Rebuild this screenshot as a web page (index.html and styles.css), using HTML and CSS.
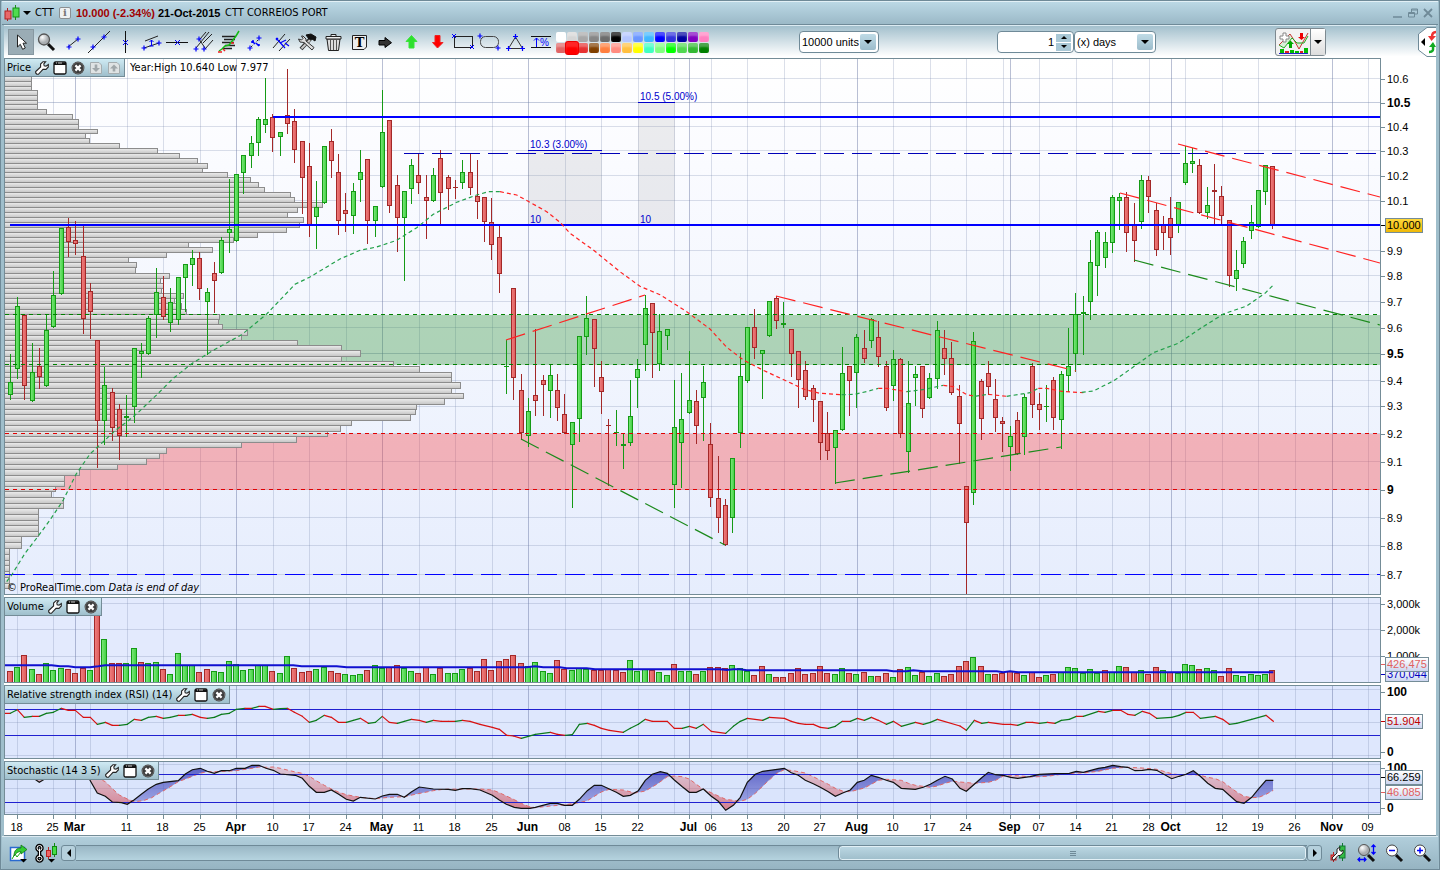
FILE: index.html
```
<!DOCTYPE html>
<html lang="en">
<head>
<meta charset="utf-8">
<title>CTT CORREIOS PORT</title>
<link rel="stylesheet" href="styles.css">
</head>
<body>
<svg class="defs" aria-hidden="true">
  <defs>
    <symbol id="wrench" viewBox="0 0 14 14"><path d="M2 13.3 L.7 12 L.7 10.6 L5.6 6 L5.6 3 L8 .7 L10.6 .7 L8.8 3 L9.2 4.8 L11 5.2 L13.3 3.6 L13.3 6 L11 8.4 L8 8.4 L3.4 13.3Z" fill="#fff" stroke="#222" stroke-width="1.1"/></symbol>
    <symbol id="win" viewBox="0 0 14 14"><rect x="1" y="1" width="12" height="12" rx="1.5" fill="#fff" stroke="#111" stroke-width="1.3"/><path d="M1 1.5H13V4H1Z" fill="#111"/><path d="M3 2H4M5 2H9" stroke="#ccc"/></symbol>
    <symbol id="close" viewBox="0 0 14 14"><circle cx="7" cy="7" r="6.4" fill="#3c3c3c"/><circle cx="7" cy="7" r="5.6" fill="none" stroke="#666"/><path d="M4.4 4.4L9.6 9.6M9.6 4.4L4.4 9.6" stroke="#fff" stroke-width="2.2"/></symbol>
    <symbol id="movedown" viewBox="0 0 14 14"><path d="M1.5 1.5H10L12.5 4V12.5H1.5Z" fill="#dfe3e4" stroke="#a5adb0"/><path d="M5.7 3.5H8.3V7H11L7 11L3 7H5.7Z" fill="#a0a7aa"/></symbol>
    <symbol id="moveup" viewBox="0 0 14 14"><path d="M1.5 1.5H10L12.5 4V12.5H1.5Z" fill="#dfe3e4" stroke="#a5adb0"/><path d="M5.7 10.5H8.3V7.5H11L7 3.5L3 7.5H5.7Z" fill="#a0a7aa"/></symbol>
    <symbol id="plus" viewBox="-3 -3 6 6" overflow="visible"><path d="M-2.5 0H2.5M0 -2.5V2.5" stroke="#00f" stroke-width="1.2"/></symbol>
    <linearGradient id="gbar" x1="0" x2="0" y1="0" y2="1"><stop offset="0" stop-color="#eee"/><stop offset="1" stop-color="#c4c4c4"/></linearGradient>
    <linearGradient id="gup" x1="0" x2="1"><stop offset="0" stop-color="#7ee87e"/><stop offset="1" stop-color="#3fd03f"/></linearGradient>
    <linearGradient id="gdn" x1="0" x2="1"><stop offset="0" stop-color="#f08080"/><stop offset="1" stop-color="#dd5a5a"/></linearGradient>
    <linearGradient id="gblue" gradientUnits="userSpaceOnUse" x1="0" x2="0" y1="765" y2="812"><stop offset="0" stop-color="#2a2fb0" stop-opacity=".75"/><stop offset="1" stop-color="#6a70d0" stop-opacity=".45"/></linearGradient>
    <linearGradient id="gred" gradientUnits="userSpaceOnUse" x1="0" x2="0" y1="765" y2="812"><stop offset="0" stop-color="#d88" stop-opacity=".3"/><stop offset="1" stop-color="#d04050" stop-opacity=".65"/></linearGradient>
    <radialGradient id="lens" cx=".35" cy=".3"><stop offset="0" stop-color="#fff"/><stop offset="1" stop-color="#a9adb0"/></radialGradient>
  </defs>
</svg>
<div class="window">
  <header class="titlebar">
    <svg class="ticker" viewBox="0 0 16 18"><path d="M3.500 4V17" stroke="#b02020"/><rect x="1" y="7" width="6" height="8" fill="#e86868" stroke="#b02020"/><path d="M11.500 1V16" stroke="#159015"/><rect x="9" y="4" width="6" height="9" fill="#4fdc4f" stroke="#159015"/></svg>
    <button class="caret" aria-label="Choose instrument"><svg viewBox="0 0 8 4"><path d="M0 0H8L4 4Z"/></svg></button>
    <span class="symbol">CTT</span>
    <span class="info">i</span>
    <strong class="quote">10.000 (-2.34%)</strong>
    <strong class="date">21-Oct-2015</strong>
    <span class="fullname">CTT CORREIOS PORT</span>
    <div class="winbtns">
      <button aria-label="Minimize"><svg viewBox="0 0 10 10"><path d="M0 9H9" stroke-width="1.5"/></svg></button>
      <button aria-label="Restore"><svg viewBox="0 0 10 10"><path d="M3.500 4V1H9.500V6H7M.5 4.500H6.500V9H.5ZM3.500 2H9.500M.5 5.500H6.500"/></svg></button>
      <button aria-label="Close window"><svg viewBox="0 0 10 10"><path d="M1 1L9 9M9 1L1 9" stroke-width="1.8"/></svg></button>
    </div>
  </header>

  <div class="toolbar">
    <div class="tools">
      <button class="on" aria-label="Pointer"><svg viewBox="0 0 26 26"><path d="M9.500 6V18L12.300 15.300L14.600 20.300L17.300 19L15 14.200H18.500Z" fill="#fff" stroke="#222"/></svg></button>
      <button aria-label="Zoom"><svg viewBox="0 0 26 26"><path d="M14 15L20 21" stroke="#111" stroke-width="3"/><circle cx="10" cy="10.500" r="5.500" fill="url(#lens)" stroke="#555" stroke-width="1.300"/></svg></button>
      <button aria-label="Segment"><svg viewBox="0 0 26 26"><path d="M8 18L18 10" stroke="#222"/><use href="#plus" x="6" y="15" width="6" height="6"/><use href="#plus" x="15" y="7" width="6" height="6"/></svg></button>
      <button aria-label="Line"><svg viewBox="0 0 26 26"><path d="M2 24L24 2" stroke="#222"/><use href="#plus" x="4" y="15" width="6" height="6"/><use href="#plus" x="15" y="5" width="6" height="6"/></svg></button>
      <button aria-label="Vertical line"><svg viewBox="0 0 26 26"><path d="M13.500 2V24" stroke="#111"/><path d="M11 11L16 16M16 11L11 16" stroke="#00f"/></svg></button>
      <button aria-label="Channel"><svg viewBox="0 0 26 26"><path d="M7 12L20 7M6 19L21 14" stroke="#222"/><path d="M13.500 17V11M11.500 13L13.500 11L15.500 13M11.500 17H15.500" stroke="#00f" fill="none"/><use href="#plus" x="3" y="16" width="6" height="6"/><use href="#plus" x="18" y="11" width="6" height="6"/></svg></button>
      <button aria-label="Horizontal line"><svg viewBox="0 0 26 26"><path d="M2 13.500H24" stroke="#111"/><path d="M11 11L16 16M16 11L11 16" stroke="#00f"/></svg></button>
      <button aria-label="Pitchfork"><svg viewBox="0 0 26 26"><path d="M6 19L19 3M10 10L16 3M15 20L23 11M13 14L22 5M9 10L15 19" stroke="#222"/><use href="#plus" x="6" y="7" width="6" height="6"/><use href="#plus" x="3" y="17" width="6" height="6"/><use href="#plus" x="11" y="17" width="6" height="6"/></svg></button>
      <button aria-label="Signals"><svg viewBox="0 0 26 26"><path d="M6 7.500H20M8 10.500H19M6 13.500H18M9 16.500H19M7 19.500H16" stroke="#222" stroke-width="1.500"/><path d="M3 22L6 20L9 17L13 16L17 11L20 7L23 2" stroke="#1b1" stroke-width="1.500" fill="none"/><path d="M2 23H6M7 20L9 22M15 14H18" stroke="#e22" stroke-width="1.500"/></svg></button>
      <button aria-label="Duplicate"><svg viewBox="0 0 26 26"><path d="M9 18L17 10" stroke="#222" stroke-dasharray="2 2"/><path d="M10 12L13 15M10 12V14M10 12H12M17 17L14 14M17 17V15" stroke="#00f" stroke-width="1.500"/><use href="#plus" x="5" y="16" width="6" height="6"/><use href="#plus" x="14" y="6" width="6" height="6"/></svg></button>
      <button aria-label="Parallels"><svg viewBox="0 0 26 26"><path d="M5 19L17 5M11 22L22 10" stroke="#222"/><path d="M8 9L17 19M12 14L18 11M8 11L10 9M17 14L21 17" stroke="#00f" stroke-width="1.200"/></svg></button>
      <button aria-label="Settings"><svg viewBox="0 0 26 26"><path d="M17 9L7 20" stroke="#333" stroke-width="4"/><path d="M16 11L7.500 19.500" stroke="#ccc" stroke-width="1.800"/><path d="M12 6L17 5L22 8L21 12L18 10L15 10Z" fill="#111" stroke="#111"/><path d="M9 7L12 10V12L20 18.500L18 21L10 13.500L6 13L4.500 10L7.500 11L9 9.500L7.500 7Z" fill="#ddd" stroke="#333"/></svg></button>
      <button aria-label="Delete"><svg viewBox="0 0 26 26"><path d="M7 10H20L18.500 21.500H8.500Z" fill="#ddd" stroke="#222"/><path d="M6 7.500H21V10H6ZM11 5.500H16V7.500H11Z" fill="#eee" stroke="#222"/><path d="M10.500 11V21M13.500 11V21M16.500 11V21" stroke="#555"/></svg></button>
      <button aria-label="Text"><svg viewBox="0 0 26 26"><path d="M6.500 6.500H20.500V18L18 20.500H6.500Z" fill="#eee" stroke="#222"/><text x="13.500" y="18" class="glyph-t">T</text></svg></button>
      <button aria-label="Arrow right"><svg viewBox="0 0 26 26"><path d="M7 11.500H13V8.500L19.500 13.700L13 18.500V16H7Z" fill="#333" stroke="#000"/></svg></button>
      <button aria-label="Arrow up"><svg viewBox="0 0 26 26"><path d="M11 19V12.500H8L13.500 6.500L19 12.500H16V19Z" fill="#2de02d" stroke="#3be53b"/></svg></button>
      <button aria-label="Arrow down"><svg viewBox="0 0 26 26"><path d="M11 6.500V13.500H8.500L13.500 19L19 13.500H16V6.500Z" fill="#f00" stroke="#e22"/></svg></button>
      <button aria-label="Rectangle"><svg viewBox="0 0 26 26"><rect x="4.500" y="7.500" width="18" height="11" fill="none" stroke="#222"/><path d="M2 5L6 9M6 5L2 9M20 16L24 20M24 16L20 20" stroke="#00f"/></svg></button>
      <button aria-label="Ellipse"><svg viewBox="0 0 26 26"><rect x="4.500" y="7.500" width="18" height="11" rx="5" fill="none" stroke="#444"/><use href="#plus" x="1" y="4" width="6" height="6"/><use href="#plus" x="19" y="16" width="6" height="6"/></svg></button>
      <button aria-label="Triangle"><svg viewBox="0 0 26 26"><path d="M13.500 8L6.500 19.500H20.500Z" fill="none" stroke="#333"/><use href="#plus" x="10.500" y="4.500" width="6" height="6"/><use href="#plus" x="3.500" y="16.500" width="6" height="6"/><use href="#plus" x="17.500" y="16.500" width="6" height="6"/></svg></button>
      <button aria-label="Percentage"><svg viewBox="0 0 26 26"><path d="M3 7.500H23M3 18.500H23" stroke="#111"/><path d="M8.500 18V9M6 11.500L8.500 9L11 11.500" stroke="#00f" fill="none"/><text x="16.500" y="17" class="glyph-p">%</text></svg></button>
    </div>
    <div class="palette">
      <button style="background:#fff" aria-label="White"></button><button style="background:#d6d6d6" aria-label="Light grey"></button><button style="background:#a8a8a8" aria-label="Silver"></button><button style="background:#868686" aria-label="Grey"></button><button style="background:#6c6c6c" aria-label="Dark grey"></button><button style="background:#000" aria-label="Black"></button><button style="background:#b4c6ff" aria-label="Pale blue"></button><button style="background:#6a96ff" aria-label="Soft blue"></button><button style="background:#40b8ff" aria-label="Sky"></button><button style="background:#0000ff" aria-label="Blue"></button><button style="background:#3232dc" aria-label="Royal blue"></button><button style="background:#0000a0" aria-label="Navy"></button><button style="background:#8000c0" aria-label="Purple"></button><button style="background:#ff80c0" aria-label="Pink"></button>
      <button style="background:#e06464" aria-label="Rose"></button><button class="picked" style="background:#f00" aria-label="Red"></button><button style="background:#e63232" aria-label="Crimson"></button><button style="background:#804000" aria-label="Brown"></button><button style="background:#ff8040" aria-label="Orange"></button><button style="background:#ff8c80" aria-label="Salmon"></button><button style="background:#ffc040" aria-label="Amber"></button><button style="background:#ffff00" aria-label="Yellow"></button><button style="background:#40ffc0" aria-label="Aqua"></button><button style="background:#80ff80" aria-label="Light green"></button><button style="background:#00ff00" aria-label="Lime"></button><button style="background:#50d850" aria-label="Mid green"></button><button style="background:#32b832" aria-label="Leaf"></button><button style="background:#008000" aria-label="Green"></button>
    </div>
    <div class="field units"><select aria-label="Units"><option>10000 units</option></select><span class="drop"><svg viewBox="0 0 8 4"><path d="M0 0H8L4 4Z"/></svg></span></div>
    <div class="period">
      <div class="field count"><input type="text" value="1" aria-label="Period count"><span class="spin"><button aria-label="Increase"><svg viewBox="0 0 6 3"><path d="M0 3H6L3 0Z"/></svg></button><button aria-label="Decrease"><svg viewBox="0 0 6 3"><path d="M0 0H6L3 3Z"/></svg></button></span></div>
      <div class="field unit"><select aria-label="Period unit"><option>(x) days</option></select><span class="drop"><svg viewBox="0 0 8 4"><path d="M0 0H8L4 4Z"/></svg></span></div>
    </div>
    <div class="indicator">
      <button aria-label="Add indicator"><svg viewBox="0 0 32 24"><path d="M2 15L8 9L13 4L17 10L22 19L31 3V8L25 12L20 13L15 8L7 18Z" fill="#d8f0d8"/><path d="M2 15L8 9L13 4L17 10L22 19L31 3" fill="none" stroke="#c33"/><path d="M2 15L7 18L15 8L20 13L27 13L31 6" fill="none" stroke="#2a2"/><path d="M6 3H9V6H12V9H9V12H6V9H3V6H6Z" fill="#fff" stroke="#888"/><path d="M12 18V14H10L13.500 10.500L17 14H15V18Z" fill="#0a0"/><path d="M23 3H26V7H28L24.500 10L21 7H23Z" fill="#e00"/><path d="M3 19H7V23H3ZM13 20H17V23H13ZM18 21H22V23H18ZM27 18H31V23H27Z" fill="#0b0"/><path d="M8 21H12V23H8ZM23 21H26V23H23Z" fill="#d22"/><path d="M2 23.500H31" stroke="#22c"/></svg></button>
      <button class="more" aria-label="Indicator list"><svg viewBox="0 0 8 4"><path d="M0 0H8L4 4Z"/></svg></button>
    </div>
    <button class="sidetab" aria-label="Open side panel"><svg viewBox="0 0 18 30"><path d="M18 .5H9L.5 7V23L9 29.500H18" fill="#fff" stroke="#6f8a98"/><path d="M7 11V19L3 15Z"/><path d="M18 5C14 5 14 8 14 10" stroke="#e33" stroke-width="2.500" fill="none"/><path d="M10 9H18L13.500 14Z" fill="#e33"/><path d="M11 25C16 25 15 22 15 20" stroke="#1a2" stroke-width="2.500" fill="none"/><path d="M11 20H18L15 15Z" fill="#1a2"/></svg></button>
  </div>

  <main class="charts">
    <section class="pane price">
      <div class="plot">
        <svg id="price" viewBox="5 59 1375 535" preserveAspectRatio="none"></svg>
        <div class="tag"><span>Price</span><button aria-label="Price settings"><svg><use href="#wrench"/></svg></button><button aria-label="Price window"><svg><use href="#win"/></svg></button><button aria-label="Close price"><svg><use href="#close"/></svg></button><button aria-label="Move price down"><svg><use href="#movedown"/></svg></button><button aria-label="Move price up"><svg><use href="#moveup"/></svg></button></div>
        <div class="range">Year:High 10.640 Low 7.977</div>
        <div class="credit">© ProRealTime.com <em>Data is end of day</em></div>
        <div id="notes"></div>
      </div>
      <div class="axis" id="priceAxis"></div>
    </section>
    <section class="pane volume">
      <div class="plot">
        <svg id="volume" viewBox="5 598 1375 84" preserveAspectRatio="none"></svg>
        <div class="tag"><span>Volume</span><button aria-label="Volume settings"><svg><use href="#wrench"/></svg></button><button aria-label="Volume window"><svg><use href="#win"/></svg></button><button aria-label="Close volume"><svg><use href="#close"/></svg></button></div>
      </div>
      <div class="axis" id="volumeAxis"></div>
    </section>
    <section class="pane rsi">
      <div class="plot">
        <svg id="rsi" viewBox="5 686 1375 72" preserveAspectRatio="none"></svg>
        <div class="tag"><span>Relative strength index (RSI) (14)</span><button aria-label="RSI settings"><svg><use href="#wrench"/></svg></button><button aria-label="RSI window"><svg><use href="#win"/></svg></button><button aria-label="Close RSI"><svg><use href="#close"/></svg></button></div>
      </div>
      <div class="axis" id="rsiAxis"></div>
    </section>
    <section class="pane stoch">
      <div class="plot">
        <svg id="stoch" viewBox="5 762 1375 52" preserveAspectRatio="none"></svg>
        <div class="tag"><span>Stochastic (14 3 5)</span><button aria-label="Stochastic settings"><svg><use href="#wrench"/></svg></button><button aria-label="Stochastic window"><svg><use href="#win"/></svg></button><button aria-label="Close stochastic"><svg><use href="#close"/></svg></button></div>
      </div>
      <div class="axis" id="stochAxis"></div>
    </section>
    <div class="dates"><div class="days" id="days"></div></div>
  </main>

  <footer class="bottombar">
    <button class="share" aria-label="Share"><svg viewBox="0 0 20 20"><rect x="1.500" y="4.500" width="14" height="13" fill="#fff" stroke="#2a6ad0" stroke-width="1.500"/><path d="M3 16L6 11L8 14L12 9" stroke="#1a1" fill="none"/><path d="M5 13C5 7 8 5 12 5V2L18 6.500L12 11V8.500C9 8.500 7 10 5 13Z" fill="#3c3" stroke="#171" stroke-width=".8"/><path d="M11 16H18L14.500 19.500Z"/></svg></button>
    <button class="link" aria-label="Link charts"><svg viewBox="0 0 24 20"><g fill="none" stroke="#000" stroke-width="3.500"><rect x="3" y="2.500" width="5" height="5" rx="2.500"/><rect x="3" y="13" width="5" height="5" rx="2.500"/><path d="M5.500 6V14"/></g><g fill="none" stroke="#fff"><rect x="3" y="2.500" width="5" height="5" rx="2.500"/><rect x="3" y="13" width="5" height="5" rx="2.500"/><path d="M5.500 6V14"/></g><path d="M14.500 4V16" stroke="#b22"/><rect x="12.500" y="7.500" width="4" height="6" fill="#e66" stroke="#b22"/><path d="M20.500 0V14" stroke="#181"/><rect x="18.500" y="3.500" width="4" height="8" fill="#4d4" stroke="#181"/><path d="M14 16H21L17.500 19.500Z"/></svg></button>
    <button class="step" aria-label="Scroll left"><svg viewBox="0 0 4 8"><path d="M4 0V8L0 4Z"/></svg></button>
    <div class="track"><div class="thumb"><i></i></div></div>
    <button class="step" aria-label="Scroll right"><svg viewBox="0 0 4 8"><path d="M0 0V8L4 4Z"/></svg></button>
    <button class="foot" aria-label="Chart style"><svg viewBox="0 0 20 20"><path d="M5.500 9V19" stroke="#b22"/><rect x="3" y="12" width="5" height="5" fill="#e55" stroke="#b22"/><path d="M14.500 0V18" stroke="#173"/><rect x="11.500" y="3" width="5.500" height="12" fill="#3b4" stroke="#173"/><path d="M5 17L4 15L9 10V6L12 4L11.500 7L13 8.500L15 7V10L12 12.500H10L6 17Z" fill="#fff" stroke="#222"/></svg></button>
    <button class="foot" aria-label="Fit"><svg viewBox="0 0 20 20"><path d="M12 12L18 18" stroke="#111" stroke-width="3"/><circle cx="8" cy="7" r="5.500" fill="url(#lens)" stroke="#555"/><path d="M17.500 2V11M15.500 4L17.500 2L19.500 4M15.500 9L17.500 11L19.500 9M2 16.500H10M4 14.500L2 16.500L4 18.500M8 14.500L10 16.500L8 18.500" stroke="#00f" fill="none" stroke-width="1.300"/></svg></button>
    <button class="foot" aria-label="Zoom out"><svg viewBox="0 0 20 20"><path d="M12 12L18 18" stroke="#111" stroke-width="3"/><circle cx="8" cy="7.500" r="5.500" fill="#fff" stroke="#444"/><path d="M5 7.500H11" stroke="#00f" stroke-width="1.500"/></svg></button>
    <button class="foot" aria-label="Zoom in"><svg viewBox="0 0 20 20"><path d="M12 12L18 18" stroke="#111" stroke-width="3"/><circle cx="8" cy="7.500" r="5.500" fill="#fff" stroke="#444"/><path d="M5 7.500H11M8 4.500V10.500" stroke="#00f" stroke-width="1.500"/></svg></button>
  </footer>
</div>
<script src="chart.js"></script>
</body>
</html>
```
FILE: styles.css
```
* { box-sizing: border-box; }
body {
  margin: 0;
  font: 11px/14px "DejaVu Sans Condensed", "Open Sans", sans-serif;
  color: #000;
}
button, input, select { font: inherit; color: inherit; }
button { margin: 0; padding: 0; border: 0; background: none; display: flex; align-items: center; justify-content: center; }
.defs { position: absolute; width: 0; height: 0; }
.window {
  height: 100vh;
  display: flex;
  flex-direction: column;
  border: 1px solid #6f8a98;
  padding: 0 3px;
  background: #9fbecb;
}

.titlebar {
  display: flex;
  align-items: center;
  height: 24px;
  flex: none;
  margin: 0 -2px;
  padding: 0 2px;
  background: linear-gradient(#bbd8e5, #9bb9c7);
  border-bottom: 1px solid #6f8a98;
  border-top: 1px solid #e2f0f6;
}
.ticker { width: 16px; height: 18px; flex: none; }
.caret { margin: 0 4px 0 3px; }
.caret svg { width: 8px; height: 4px; }
.symbol { width: 24px; }
.info {
  width: 12px;
  height: 12px;
  margin-right: 5px;
  border: 1px solid #8a8f92;
  border-radius: 2px;
  background: #eef1f2;
  color: #777;
  font: bold 10px/10px "DejaVu Serif", serif;
  text-align: center;
}
.quote, .date { font-family: "Liberation Sans", sans-serif; white-space: nowrap; }
.quote { color: #a00000; width: 82px; }
.date { width: 67px; }
.fullname { white-space: nowrap; }
.winbtns { margin-left: auto; display: flex; gap: 5px; padding-right: 3px; }
.winbtns svg { width: 10px; height: 10px; fill: none; stroke: #6f8a98; }

.toolbar {
  display: flex;
  align-items: center;
  height: 33px;
  flex: none;
  padding-left: 4px;
  background: linear-gradient(#a3c0cd, #fff 95%);
  border-top: 1px solid #dcebf2;
}
.tools { display: flex; }
.tools button { width: 26px; height: 26px; }
.tools .on { background: #9aacb5; border: 1px solid #8798a1; }
.tools svg { width: 26px; height: 26px; flex: none; }
.glyph-t { font: bold 13px "DejaVu Serif", serif; text-anchor: middle; }
.glyph-p { font: 10px "Liberation Sans", sans-serif; text-anchor: middle; fill: #00f; }
.palette {
  display: grid;
  grid-template-columns: repeat(14, 10px);
  grid-auto-rows: 10px;
  gap: 1px;
  margin-left: 2px;
}
.palette button { border-radius: 2px; box-shadow: inset 0 4px 2px rgba(255, 255, 255, .3); }
.palette .picked { margin: -1px; z-index: 1; box-shadow: 0 0 0 1px #e00, inset 0 5px 2px rgba(255, 255, 255, .15); }
.field {
  position: relative;
  height: 22px;
  background: #fff;
  border: 1px solid #6f8a98;
  border-radius: 4px;
  padding: 0 2px;
  display: flex;
  align-items: center;
  font-family: "Liberation Sans", sans-serif;
}
.field select, .field input { appearance: none; border: 0; background: none; width: 100%; height: 20px; padding: 0; margin: 0; outline: 0; }
.drop {
  position: absolute;
  right: 2px;
  top: 2px;
  width: 16px;
  height: 16px;
  border-radius: 2px;
  background: linear-gradient(#bfdbe6, #9cbccb);
  display: flex;
  align-items: center;
  justify-content: center;
  pointer-events: none;
}
.drop svg { width: 8px; height: 4px; }
.units { width: 80px; margin-left: 90px; }
.period { display: flex; margin-left: 118px; }
.count { width: 77px; }
.count input { text-align: right; padding-right: 2px; }
.spin { display: flex; flex-direction: column; gap: 1px; flex: none; }
.spin button { width: 15px; height: 8px; background: #a9c8d6; }
.spin svg { width: 6px; height: 3px; }
.unit { width: 82px; }
.indicator { display: flex; margin-left: 119px; border: 1px solid #7d8990; border-radius: 3px; background: #f2f2f2; height: 28px; }
.indicator svg { width: 32px; height: 24px; }
.indicator button { padding: 0 1px; }
.indicator .more { border-left: 1px solid #7d8990; width: 15px; padding: 0; background: linear-gradient(#fff, #ddd); }
.indicator .more svg { width: 8px; height: 4px; }
.sidetab { margin-left: auto; }
.sidetab svg { width: 18px; height: 30px; }

.charts { flex: 1; min-height: 0; display: flex; flex-direction: column; background: #fff; }
.pane { display: flex; flex: none; margin-bottom: 2px; }
.price { flex: 1; min-height: 0; }
.volume { height: 86px; }
.rsi { height: 74px; }
.stoch { height: 54px; margin-bottom: 0; }
.plot { position: relative; flex: 1; min-width: 0; border: 1px solid #748c97; overflow: hidden; }
.price .plot { background: linear-gradient(#fff, #fafbff 20%, #f4f7fe 45%, #e6edfd); }
.volume .plot { background: #e3eafd; }
.rsi .plot { background: #dee7fd; }
.stoch .plot { background: #dae4fc; }
.plot > svg { position: absolute; width: 100%; height: 100%; shape-rendering: crispEdges; }
.plot .smooth { shape-rendering: auto; }
.tag {
  position: absolute;
  left: 0;
  top: 0;
  height: 18px;
  display: flex;
  align-items: center;
  gap: 4px;
  padding: 0 3px 0 2px;
  background: linear-gradient(#cfeaf3, #9fbfcc);
  border: solid #748c97;
  border-width: 0 1px 1px 0;
  white-space: nowrap;
}
.tag svg { width: 14px; height: 14px; }
.range { position: absolute; left: 125px; top: 2px; }
.credit { position: absolute; left: 2px; bottom: -1px; }
.note { position: absolute; font: 10px/12px "Liberation Sans", sans-serif; color: #00c; transform: translateY(-100%); white-space: nowrap; }

.axis, .days { font-family: "Liberation Sans", sans-serif; }
.axis { position: relative; flex: none; width: 55px; }
.axis span { position: absolute; left: 6px; line-height: 14px; margin-top: -7px; }
.axis span::before { content: ""; position: absolute; left: -6px; top: 7px; width: 4px; height: 1px; background: #748c97; }
.axis .major, .days .major { font-weight: bold; font-size: 12px; }
.axis .value {
  left: 4px;
  height: 15px;
  margin-top: -8px;
  line-height: 13px;
  padding: 0 1px;
  border: 1px solid #748c97;
  background: linear-gradient(#fff, #ccd6f0);
  white-space: nowrap;
}
.axis .value::before { left: -5px; top: 6px; background: currentColor; }
.axis .last { background: linear-gradient(#ffd83a, #efb908); }
.dates { height: 21px; flex: none; border-bottom: 1px solid #748c97; padding: 0 56px 0 1px; }
.days { position: relative; height: 20px; }
.days span { position: absolute; top: 5px; transform: translateX(-50%); }
.days i { position: absolute; top: 0; width: 1px; height: 4px; background: #748c97; }

.bottombar {
  height: 33px;
  flex: none;
  display: flex;
  align-items: center;
  margin: 0 -2px;
  padding: 0 6px 0 7px;
  border-top: 1px solid #dcebf2;
  background: linear-gradient(#b1cedb, #96b4c2);
}
.share svg, .foot svg { width: 20px; height: 20px; }
.link { margin: 0 3px 0 5px; }
.link svg { width: 24px; height: 20px; }
.step { width: 15px; height: 16px; border: 1px solid #6f8a98; border-radius: 3px; background: #b5d0dc; }
.step svg { width: 4px; height: 8px; }
.track { flex: 1; height: 16px; border: solid #6f8a98; border-width: 1px 0; background: linear-gradient(#9ab7c5, #b5d3df); display: flex; }
.thumb { margin: 0 1px 0 62%; flex: 1; border: 1px solid #e2f0f6; border-radius: 3px; outline: 1px solid #6f8a98; background: linear-gradient(#bad6e2, #a0bfcc); display: flex; align-items: center; justify-content: center; }
.thumb i { width: 6px; height: 5px; background: repeating-linear-gradient(#6f8a98 0 1px, transparent 1px 2px); }
.foot { margin-left: 8px; }
.step + .foot { margin-left: 6px; }
```
FILE: chart.js
```
const UP = "#159a15", DOWN = "#a32828";
const left = i => Math.floor(10.1 + 7.3 * i);
const put = (id, html) => { document.getElementById(id).innerHTML = html; };
const line = (x1, y1, x2, y2, c, extra = "") => `<line x1="${x1}" y1="${y1}" x2="${x2}" y2="${y2}" stroke="${c}" ${extra}/>`;
// Points come in third-of-a-pixel units, relative to the origin of their strip.
const pts = (ox, oy, s) => s.trim().split(/\s+/).map(p => p.split(",").map(Number)).map(([x, y]) => [ox + x / 3, oy + y / 3]);
const join = a => a.map(p => p[0].toFixed(1) + "," + p[1].toFixed(1)).join(" ");

const months = [[75, "Mar"], [236, "Apr"], [382, "May"], [528, "Jun"], [689, "Jul"], [857, "Aug"], [1010, "Sep"], [1171, "Oct"], [1332, "Nov"]];
const weeks = [[17, "18"], [53, "25"], [90], [127, "11"], [163, "18"], [200, "25"], [273, "10"], [309, "17"], [346, "24"], [419, "11"], [455, "18"], [492, "25"], [565, "08"], [601, "15"], [638, "22"], [674], [711, "06"], [747, "13"], [784, "20"], [820, "27"], [893, "10"], [930, "17"], [966, "24"], [1003], [1039, "07"], [1076, "14"], [1112, "21"], [1149, "28"], [1185], [1222, "12"], [1258, "19"], [1295, "26"], [1368, "09"]];
const grid = (top, bottom) =>
  weeks.map(([x]) => line(x + .5, top, x + .5, bottom, "#7080a8", 'stroke-opacity=".25"')).join("") +
  months.map(([x]) => line(x + .5, top, x + .5, bottom, "#5a6898", 'stroke-opacity=".42"')).join("");
const rows = (ys, o = .25) => ys.map(y => line(5, y + .5, 1380, y + .5, "#7080a8", `stroke-opacity="${o}"`)).join("");

const prices = [[78, "10.6"], [102, "10.5", 1], [126, "10.4"], [150, "10.3"], [175, "10.2"], [200, "10.1"], [250, "9.9"], [275, "9.8"], [301, "9.7"], [327, "9.6"], [353, "9.5", 1], [380, "9.4"], [406, "9.3"], [433, "9.2"], [461, "9.1"], [489, "9", 1], [517, "8.9"], [545, "8.8"], [574, "8.7"]];

// Volume profile: lower edge and right edge of every bar.
const profile = `81,31 86,31 90,31 95,37 100,37 104,37 109,37 114,46 119,72 124,78 129,78 133,97 138,85 143,89 148,119 153,157 158,179 163,197 168,207 172,202 177,227 182,250 187,258 192,264 197,290 202,294 207,322 212,297 217,287 222,303 227,299 232,286 237,257 242,233 247,188 252,212 257,166 262,128 267,136 273,135 278,169 283,160 288,163 293,161 298,183 303,174 309,181 314,186 319,219 324,218 329,222 335,247 340,241 345,297 350,341 356,360 361,341 366,393 372,419 377,451 382,451 388,460 393,451 398,463 404,444 409,416 414,415 420,410 425,351 431,340 436,327 442,296 447,241 453,166 458,159 464,146 469,117 475,79 481,64 486,64 491,55 497,51 503,63 508,63 514,38 520,38 525,38 531,38 536,38 542,21 548,21 554,9 560,9 565,9 571,9 577,9 583,9 588,9`;

// Candles: colour, high, body top, body bottom, low.
const candles = `g354,382,395,399 g297,306,369,378 r315,315,386,399 g343,372,401,401 r348,366,377,388 g315,330,386,386 g271,295,327,327 g228,228,294,294 r218,227,242,256 r221,240,244,254
r226,256,319,333 r283,291,312,338 r340,340,421,467 g367,385,421,444 r388,392,428,440 r404,409,436,459 g395,416,418,436 g348,348,407,422 g343,351,354,377 g316,318,354,354
g268,292,315,337 r276,297,317,319 g288,302,323,331 g277,277,320,324 g264,264,278,311 g250,258,265,285 r252,258,289,299 g288,292,302,354 r262,273,281,312 g237,240,273,273
g179,229,233,252 g174,174,241,241 g155,155,173,193 g136,143,156,167 g117,119,143,155 g78,119,125,132 r114,117,138,151 g132,132,137,155 r69,115,124,133 r109,121,150,162
r141,141,178,213 r143,166,225,236 g181,207,217,248 g146,146,203,203 r129,141,161,177 r154,172,221,234 r193,210,214,231 g183,191,216,233 g150,172,180,201 r159,159,221,243
g206,206,221,236 g90,132,187,187 r120,120,206,212 r175,185,218,251 g191,191,218,280 g159,165,189,203 r153,175,183,193 r175,197,201,238 g168,175,201,201 r150,158,193,225
r175,177,189,209 r180,187,188,198 g160,172,183,188 r154,172,188,194 r160,196,202,218 r197,197,222,241 r198,222,245,259 r225,237,274,292 g340,366,367,393 r288,288,378,399
r374,390,433,439 g398,411,436,446 r329,395,401,415 r375,380,385,415 g364,375,391,417 r374,390,408,420 r394,414,433,433 g422,422,445,507 g336,336,419,441 g296,318,337,354
r319,319,349,386 r361,377,392,413 r419,425,426,485 g410,432,433,445 g433,444,446,468 g380,416,443,445 g359,369,378,407 g295,308,345,370 r303,303,333,377 g314,331,364,370
g329,329,336,349 g380,427,485,507 g373,419,443,487 g351,400,413,413 r390,401,426,443 g366,382,398,440 r423,444,498,506 r456,498,518,532 r499,505,545,545 g458,458,518,532
g353,376,433,447 g327,327,381,382 r309,327,348,358 g350,350,354,398 g301,301,336,336 r296,298,321,328 g302,323,325,327 r329,329,354,376 r351,351,380,407 r361,370,397,399
r385,388,400,421 r401,401,443,459 r412,433,451,459 g430,430,448,483 g347,373,430,430 r366,366,381,415 g334,337,373,407 r330,348,359,362 g318,319,341,347 r321,337,357,366
r361,366,408,410 g350,359,386,400 r358,359,434,437 g361,403,452,472 g366,374,378,405 r366,366,409,417 g373,378,398,398 g321,330,379,388 r330,348,359,374 r342,358,393,394
r385,396,424,463 r486,486,523,594 g332,341,493,504 r379,381,419,439 r361,373,387,394 r379,399,418,431 r417,421,424,451 g426,436,447,470 r412,420,454,454 g394,397,437,454
r363,366,405,417 r393,404,410,429 g385,406,407,421 r377,380,418,429 g371,374,420,448 g328,366,376,391 g293,314,354,371 g296,312,314,354 g240,262,302,319 g230,232,266,295
g232,242,258,267 g195,197,243,252 g193,197,201,229 r192,197,233,251 r203,225,241,261 g175,180,222,228 r176,180,197,212 r203,210,250,255 r216,225,233,249 r197,218,238,254
g202,202,225,232 g146,163,183,184 g148,161,164,172 r159,165,213,213 g187,205,213,218 r164,190,192,225 r186,196,216,223 r220,220,276,286 g250,270,279,290 g237,241,264,267
g205,222,231,238 g190,190,227,227 g165,165,192,204 r166,166,225,228`.split(/\s+/);

const averages = [
  [UP, pts(0, 180, "20,1205 37,1182 75,1120 115,1068 150,1020 190,960 228,883 270,822 310,785 345,752 385,722 415,697 475,640 520,595 575,551 640,511 725,464 800,402 885,313 930,291 1020,237 1080,211").concat(pts(230, 60, "440,561 500,541 560,503 610,463 680,427 740,405 775,395 810,395"))],
  ["#f22", pts(230, 60, "810,395 860,405 900,427").concat(pts(480, 200, "200,35 240,67 270,100 340,150 420,215 480,259 540,284 620,335 690,387 740,442 790,480 850,511 960,562"), pts(740, 280, "190,327 240,340 305,344"))],
  [UP, pts(740, 280, "305,344 345,343 390,332 415,325")], ["#f22", pts(740, 280, "415,325 440,325 500,335")],
  [UP, pts(740, 280, "500,335 555,328 610,316")], ["#f22", pts(740, 280, "610,316 640,320 680,344 705,349")],
  [UP, pts(740, 280, "705,349 745,343")], ["#f22", pts(740, 280, "745,343 800,349")],
  [UP, pts(740, 280, "800,349 870,338 895,325")], ["#f22", pts(740, 280, "895,325 920,325 965,334 1030,338")],
  [UP, pts(1040, 130, "125,787 160,783 220,753 280,711 340,668 415,640 480,596 550,552 620,528 675,490 700,465")]
];

function drawPrice() {
  let s = grid(59, 594) + rows(prices.map(p => p[0])) + rows([102, 353], .2);
  s += `<rect x="5" y="315" width="1375" height="50" fill="#2a9030" fill-opacity=".34"/><rect x="5" y="434" width="1375" height="56" fill="#fa3838" fill-opacity=".35"/>`;
  s += `<rect x="528" y="151" width="74" height="74" fill="#888" fill-opacity=".14"/><rect x="638" y="102" width="37" height="123" fill="#888" fill-opacity=".14"/>`;
  let top = 76;
  for (const bar of profile.split(" ")) {
    const [bottom, right] = bar.split(",").map(Number);
    s += `<rect x="3.5" y="${top + .5}" width="${right - 3}" height="${bottom - top}" fill="url(#gbar)" stroke="#8c8c8c"/>`;
    top = bottom;
  }
  candles.forEach((c, i) => {
    const g = c[0] === "g", x = left(i), [hi, a, b, lo] = c.slice(1).split(",").map(Number), k = g ? UP : DOWN;
    s += line(x + .5, hi, x + .5, lo + 1, k);
    s += b - a < 2 ? line(x - 2, a + .5, x + 3, a + .5, k)
      : `<rect x="${x - 1.5}" y="${a + .5}" width="4" height="${b - a - 1}" fill="url(#${g ? "gup" : "gdn"})" stroke="${k}"/>`;
  });
  for (const y of [314, 364]) s += line(5, y + .5, 1380, y + .5, "#008000", 'stroke-dasharray="4 4"');
  for (const y of [433, 489]) s += line(5, y + .5, 1380, y + .5, "#e00000", 'stroke-dasharray="4 4"');
  s += line(5, 574.5, 1380, 574.5, "#00f", 'stroke-dasharray="20 8"') + line(404, 153.5, 1380, 153.5, "#0000b8", 'stroke-dasharray="20 8"');
  s += line(10, 225, 1380, 225, "#00f", 'stroke-width="2"') + line(273, 117, 1380, 117, "#00f", 'stroke-width="2"');
  s += line(528, 150.5, 602, 150.5, "#00c") + line(638, 102.5, 675, 102.5, "#00c");
  const dash = 'stroke-dasharray="20 8" stroke-width="1.2"';
  s += '<g class="smooth" fill="none">';
  for (const [c, a] of averages) s += `<polyline points="${join(a)}" stroke="${c === UP ? "#22a04a" : c}" stroke-width="1.2" stroke-dasharray="4 3"/>`;
  for (const t of [[506, 340, 645, 295], [776, 296, 1076, 371], [1178, 144, 1380, 197], [1120, 193, 1380, 263]]) s += line(...t, "#f22", dash);
  for (const t of [[521, 439, 725, 545], [835, 483, 1061, 447], [1134, 260, 1380, 325]]) s += line(...t, "#1c8a1c", dash);
  put("price", s + "</g>");
  put("notes", [[530, 151, "10.3 (3.00%)"], [640, 103, "10.5 (5.00%)"], [530, 226, "10"], [640, 226, "10"]]
    .map(([x, y, t]) => `<span class="note" style="left:${(x - 5) / 13.75}%;top:${(y - 59) / 5.35}%">${t}</span>`).join(""));
}

const volumes = `r247 g235 r199 g241 r256 g223 g244 g238 r241 r253 r238 g244 r78 g151 r223 r223 g223 g178 r220 g223 g220 r241 g256 g193 g229 g229 r250 r241 g247 g250 g217 g226 g244 g241 g229 g229 r247 g253 g202 r238 r250 r247 g241 g235 r247 r253 g256 g259 g256 r244 g229 g238 r235 r229 g238 g247 r253 r235 g256 r238 g253 g253 g241 r238 r247 r211 r244 r217 r211 r199 r223 g232 g220 g247 g253 r214 r241 g244 g238 g241 r244 r244 r241 r244 r250 g214 g247 g241 r244 g250 g259 r226 g247 g247 r256 g247 r235 r235 r238 g229 g238 g247 r259 r232 g256 r265 r265 r253 r238 r256 r253 r232 r253 g256 g238 r253 g256 r250 g262 r262 r253 g265 r241 g235 g259 r250 g262 g253 r262 r256 r230 r217 g205 r232 g256 r256 r253 r247 r253 g259 r250 r265 g259 r256 g250 g235 g238 g253 g241 g253 r244 g250 g232 r235 r250 g244 r256 r235 g244 r250 g253 g226 g229 r241 g238 g244 r262 r238 g259 g262 g256 g259 g256 r244`.split(" ");
function drawVolume() {
  let s = grid(598, 682) + rows([603, 629, 656]);
  volumes.forEach((v, i) => {
    const g = v[0] === "g", y = Math.round(590 + v.slice(1) / 3) - 1;
    s += `<rect x="${left(i) - 2.5}" y="${y + .5}" width="5" height="${683 - y}" fill="url(#${g ? "gup" : "gdn"})" stroke="${g ? UP : DOWN}"/>`;
  });
  const avg = pts(0, 590, "15,226 155,226 180,229 205,229 226,232 270,232 295,229 315,226 880,226 905,229 1010,229 1040,232 1440,232").concat(pts(480, 590, "140,232 165,229 190,232 240,232 260,235 320,235 345,238 720,238 740,240 760,238 780,238 800,241 1220,241 1240,244 1280,244 1300,241 1330,244 1550,244 1570,247 1590,244 1615,247 2380,247"));
  put("volume", s + `<polyline class="smooth" points="${join(avg)}" fill="none" stroke="#1010d0" stroke-width="2"/>`);
}

const rsi = pts(0, 590, "15,370 31,370 52,359 73,382 97,379 118,379 139,370 160,367 184,355 205,361 226,361 250,382 271,382 292,403 316,397 337,406 358,406 382,403 403,388 424,391 445,382 469,379 490,385 511,382 535,376 556,376 577,373 601,382 622,385 643,382 664,373 688,370 709,358 735,355 756,355 777,349 795,349 820,358 841,356 862,355 883,367 907,379 928,397 949,391 973,376 994,382 1015,397 1039,397 1060,391 1081,385 1105,400 1126,397 1147,379 1168,397 1192,400 1213,394 1234,388 1258,391 1279,397 1300,391 1324,394 1345,394 1366,394 1387,391 1410,394 1440,403")
  .concat(pts(480, 590, "37,412 58,418 80,436 100,438 124,445 145,439 166,433 211,427 232,433 256,436 277,434 298,403 322,400 343,406 364,415 388,421 430,427 451,415 475,403 496,388 517,394 562,394 583,415 607,415 628,409 649,415 670,403 694,424 737,430 760,409 781,394 802,385 848,391 868,382 913,385 934,394 955,400 976,403 1000,403 1021,412 1045,415 1066,409 1087,394 1111,394 1132,385 1153,391 1174,382 1195,391 1219,403 1240,394 1264,409 1306,397 1330,403 1351,397 1372,388 1440,408"),
    pts(960, 590, "19,421 43,391 65,400 85,397 130,403 152,403 173,406 198,397 217,397 238,400 262,397 285,400 304,391 328,388 349,379 370,379 415,364 435,367 458,361 482,361 503,373 525,376 547,364 568,370 590,385 635,382 657,376 678,367 700,367 721,385 766,379 788,388 808,403 830,400 875,388 918,376 940,394"));
function drawRsi() {
  let s = grid(686, 758) + rows([689, 722, 755]) + line(5, 709.5, 1380, 709.5, "#2020d0") + line(5, 735.5, 1380, 735.5, "#2020d0") + '<g class="smooth">';
  for (let i = 1; i < rsi.length; i++) {
    const [a, b] = [rsi[i - 1], rsi[i]];
    s += line(a[0], a[1], b[0], b[1], b[1] < a[1] ? "#0b7a1b" : "#d81010", 'stroke-width="1.2" stroke-linecap="round"');
  }
  put("rsi", s + "</g>");
}

const fast = pts(0, 590, "15,560 80,560 105,568 118,577 133,568 200,560 265,562 292,609 316,619 337,636 364,638 382,643 403,629 424,613 445,597 469,583 490,577 535,572 556,552 577,539 601,535 622,544 643,550 664,542 688,542 709,535 735,535 756,526 777,526 798,535 820,541 841,552 886,556 907,565 928,589 949,607 973,607 994,600 1015,612 1039,628 1060,633 1081,622 1126,627 1147,618 1168,613 1192,613 1213,622 1234,606 1258,591 1300,597 1345,598 1366,601 1387,596 1410,596")
  .concat(pts(480, 590, "0,600 37,616 58,630 79,643 103,652 124,655 150,655 166,652 211,640 232,640 253,646 277,646 298,628 322,602 343,586 364,586 388,597 409,607 430,619 451,616 475,602 496,571 517,553 541,545 562,550 583,570 607,590 628,607 649,607 670,597 694,619 715,634 737,661 760,646 781,622 802,577 826,553 848,544 913,535 934,548 955,556 976,571 1000,581 1021,592 1045,605 1066,619 1090,608 1111,600 1132,577 1153,571 1174,556 1195,562 1219,571 1240,577 1264,595 1306,598 1330,592 1351,583 1372,571 1395,559 1417,567 1440,595"),
    pts(960, 590, "19,604 43,583 65,563 85,547 107,554 130,556 152,562 173,565 210,560 238,553 285,551 328,550 349,544 370,547 415,535 435,532 458,526 482,530 503,532 525,542 547,541 568,538 590,541 635,566 657,559 678,553 700,542 721,559 743,580 766,595 788,598 808,616 830,635 852,640 875,622 897,595 918,571 940,571"));
const slow = pts(0, 590, "15,560 265,560 295,565 316,575 337,596 358,615 382,627 403,635 430,632 455,623 475,611 505,594 535,575 570,562 600,550 622,545 650,545 709,542 756,535 777,531 798,532 820,531 841,535 886,546 907,550 928,559 950,573 973,586 994,597 1015,606 1039,614 1060,618 1081,622 1126,626 1168,622 1213,620 1250,612 1300,602 1330,598 1387,597")
  .concat(pts(480, 590, "0,597 37,600 58,608 103,629 124,640 145,649 166,653 211,648 256,644 298,638 322,632 364,606 388,598 430,600 465,609 496,603 530,583 562,560 583,558 607,560 628,567 649,583 670,598 694,608 715,618 737,628 780,634 802,628 826,610 860,577 890,550 913,539 940,542 976,549 1000,560 1045,583 1066,595 1090,604 1111,605 1153,594 1174,583 1195,571 1219,568 1264,571 1285,580 1306,586 1351,592 1372,588 1395,580 1417,574 1440,576"),
    pts(960, 590, "43,580 85,577 107,571 130,558 173,557 217,561 262,559 304,553 349,549 370,549 415,544 458,535 503,532 547,534 590,538 635,551 657,554 700,554 721,556 743,562 766,566 788,575 808,590 830,606 852,619 875,623 897,622 918,613 940,601"));
const at = (a, x) => {
  let i = 1;
  while (i < a.length - 1 && a[i][0] < x) i++;
  const [p, q] = [a[i - 1], a[i]];
  return p[1] + (q[1] - p[1]) * (x - p[0]) / (q[0] - p[0]);
};
function drawStoch() {
  const base = [], above = [], below = [];
  for (let x = 5; x <= 1273; x++) {
    const k = at(fast, x), d = at(slow, x);
    base.unshift([x, d]);
    above.push([x, Math.min(k, d)]);
    below.push([x, Math.max(k, d)]);
  }
  let s = grid(762, 814) + rows([764, 788, 812]) + '<g class="smooth">';
  s += `<polygon points="${join(above.concat(base))}" fill="url(#gblue)"/><polygon points="${join(below.concat(base))}" fill="url(#gred)"/>`;
  s += `<polyline points="${join(slow)}" fill="none" stroke="#e06868" stroke-dasharray="4 3"/>`;
  s += `</g>` + line(5, 774.5, 1380, 774.5, "#2020d0") + line(5, 802.5, 1380, 802.5, "#2020d0");
  put("stoch", s + `<polyline class="smooth" points="${join(fast)}" fill="none" stroke="#111" stroke-width="1.2"/>`);
}

// Scale labels: y, text, kind, colour.
const scale = (id, top, height, list) => put(id, list.map(([y, t, kind = "", c = "#000"]) =>
  `<span class="${kind === 1 ? "major" : kind}" style="top:${(y + .5 - top) / height * 100}%;color:${c}">${t}</span>`).join(""));
scale("priceAxis", 58, 537, prices.concat([[225, "10.000", "value last"]]));
scale("volumeAxis", 597, 86, [[603, "3,000k"], [629, "2,000k"], [656, "1,000k"], [674, "370,044", "value", "#0000c0"], [664, "426,475", "value", "#e06060"]]);
scale("rsiAxis", 685, 74, [[691, "100", 1], [721, "51.904", "value", "#c00000"], [751, "0", 1]]);
scale("stochAxis", 761, 54, [[767, "100", 1], [792, "46.085", "value", "#e06060"], [778, "66.259", "value"], [807, "0", 1]]);
put("days", weeks.filter(w => w[1]).concat(months.map(m => [...m, 1])).map(([x, t, m]) =>
  `<i style="left:${(x - 5) / 13.75}%"></i><span class="${m ? "major" : ""}" style="left:${(x - 5.5) / 13.75}%">${t}</span>`).join(""));
drawPrice(); drawVolume(); drawRsi(); drawStoch();
```
